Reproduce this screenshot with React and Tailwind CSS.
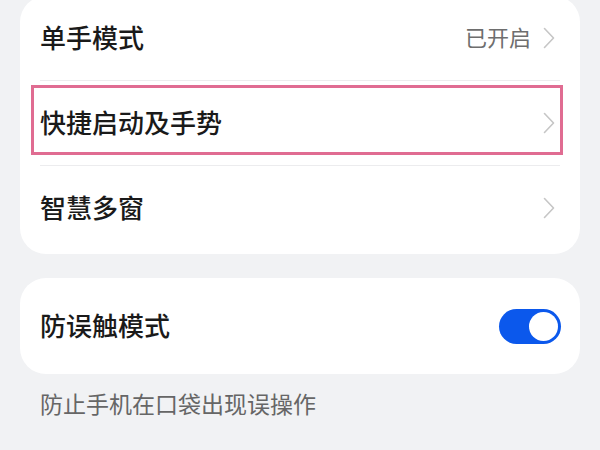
import React from 'react';

const font = { fontFamily: '"Noto Sans CJK SC", "Noto Sans", sans-serif' };

const Chevron = () => (
    <svg width="12" height="22" viewBox="0 0 12 22" fill="none" className="shrink-0">
        <path d="M1.5 1.5 L10.5 11 L1.5 20.5" stroke="#c6c6c6" strokeWidth="1.6" strokeLinecap="round" strokeLinejoin="round" />
    </svg>
);

const Row = ({ title, value, highlight }) => (
    <div className="relative flex h-[84px] items-center justify-between pl-[20px] pr-[25px]">
        <span className="pb-[4px] text-[26px] font-medium text-[#1a1a1a]">{title}</span>
        <div className="flex items-center gap-[12px]">
            {value && <span className="pb-[3px] text-[22px] text-[#6e6e6e]">{value}</span>}
            <Chevron />
        </div>
        {/* annotation box drawn over the row */}
        {highlight && (
            <div className="absolute left-[11px] right-[17px] top-[4px] h-[70px] border-[3px] border-[#e06c92]" />
        )}
    </div>
);

const Divider = () => <div className="mx-[20px] h-px bg-[#ececee]" />;

const App = () => {
    return (
        <div className="h-[450px] w-[600px] overflow-hidden bg-[#f1f2f4] px-[20px]" style={font}>
            <div className="-mt-[4px] rounded-[26px] bg-white pb-[4px]">
                <Row title="单手模式" value="已开启" />
                <Divider />
                <Row title="快捷启动及手势" highlight />
                <Divider />
                <Row title="智慧多窗" />
            </div>

            <div className="mt-[24px] flex h-[96px] items-center justify-between rounded-[26px] bg-white pl-[20px] pr-[19px]">
                <span className="pb-[4px] text-[26px] font-medium text-[#1a1a1a]">防误触模式</span>
                <div className="flex h-[35px] w-[62px] items-center justify-end rounded-full bg-[#0b58ec] pr-[3px]">
                    <div className="h-[29px] w-[29px] rounded-full bg-white" />
                </div>
            </div>

            <p className="mt-[15px] pl-[20px] text-[23px] leading-[28px] text-[#666]">防止手机在口袋出现误操作</p>
        </div>
    );
};

export default App;
